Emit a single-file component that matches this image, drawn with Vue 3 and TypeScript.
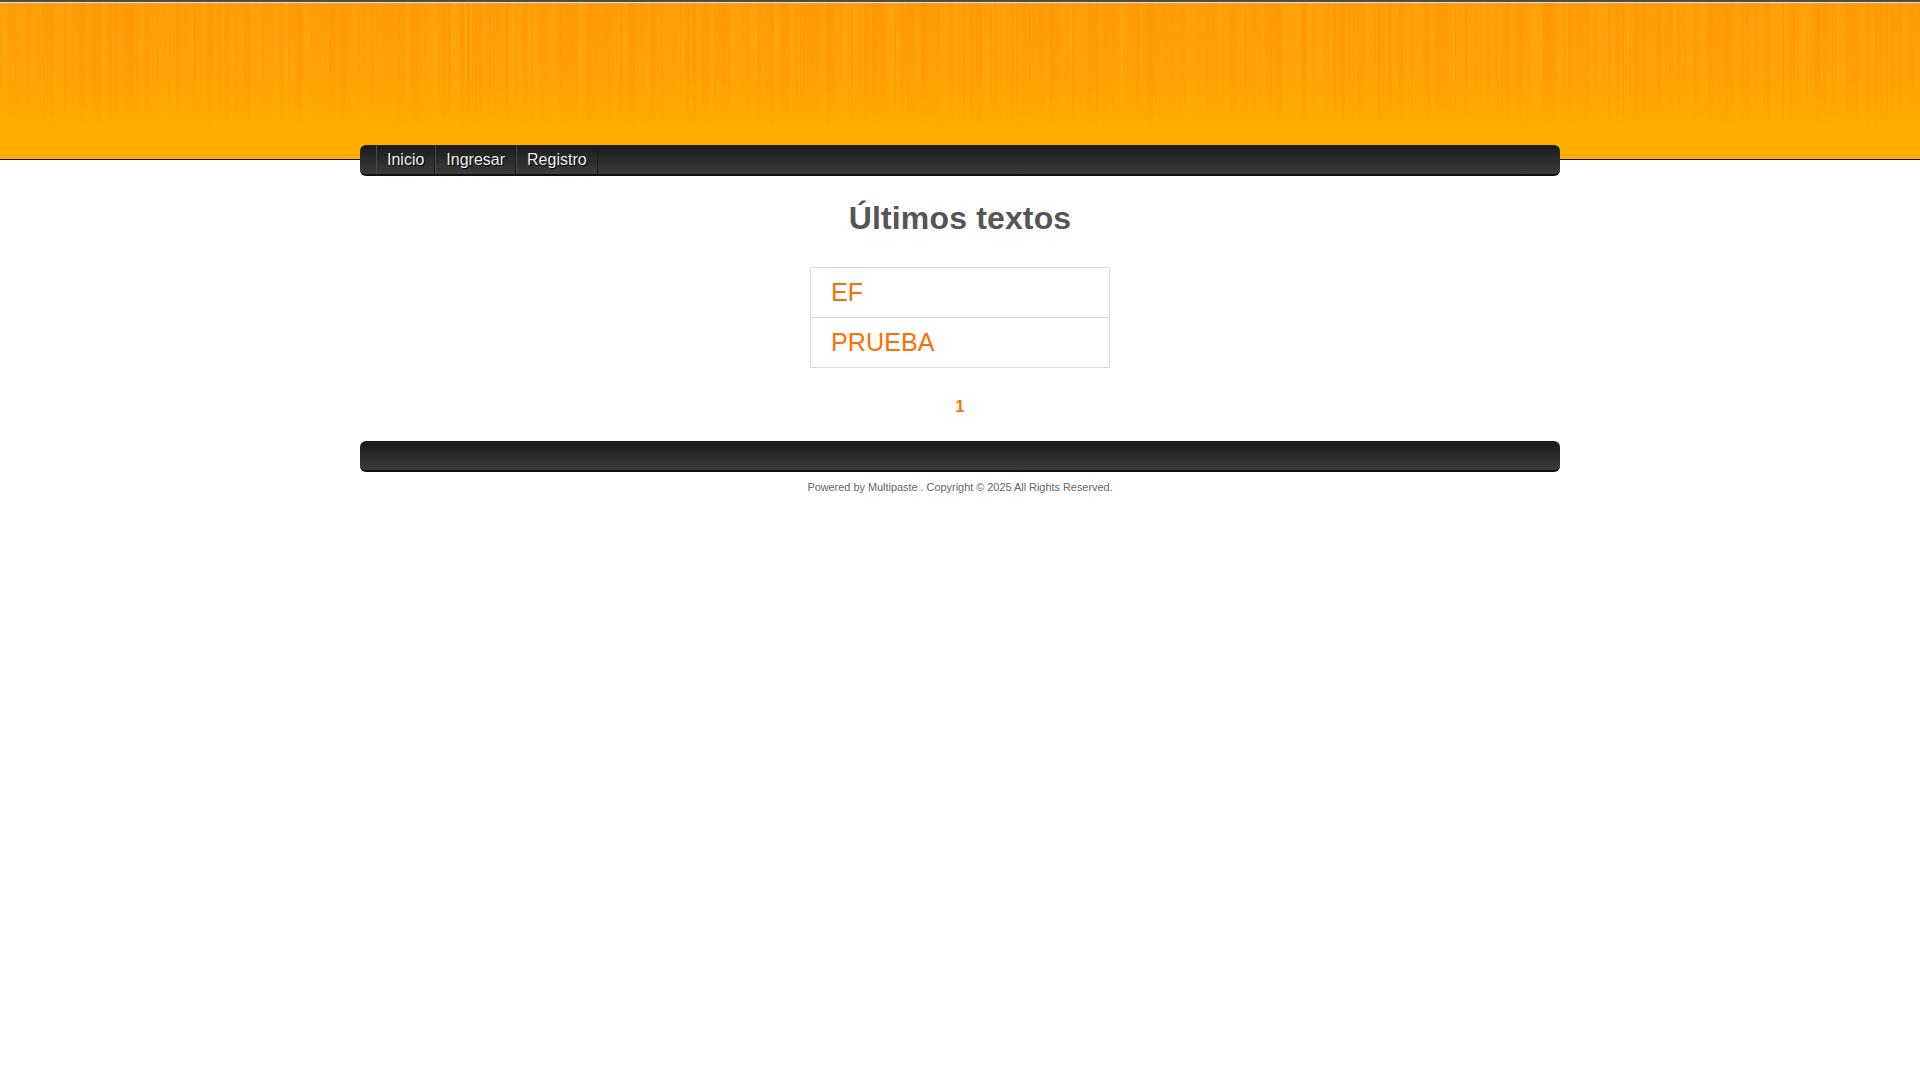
<script setup lang="ts">
const links: string[] = ['Inicio', 'Ingresar', 'Registro']
const posts: string[] = ['EF', 'PRUEBA']

// Pseudo-random vertical streaks for the header texture.
let seed = 20250
const rnd = (): number => {
  seed = (seed * 16807) % 2147483647
  return seed / 2147483647
}
const makeStreaks = (): string => {
  const stops: string[] = []
  let x = 0
  while (x < 1920) {
    const w = 1 + Math.floor(rnd() * rnd() * 6)
    const a = (rnd() * 0.34).toFixed(2)
    const c = rnd() > 0.55 ? `rgba(255,140,0,${a})` : `rgba(255,178,20,${a})`
    stops.push(`${c} ${x}px ${x + w}px`)
    x += w
  }
  return `linear-gradient(90deg, ${stops.join(',')})`
}
const streaks = makeStreaks()
</script>

<template>
  <div class="page">
    <header class="header">
      <div class="streaks" :style="{ backgroundImage: streaks }"></div>
    </header>
    <div class="wrap">
      <nav class="bar nav">
        <a v-for="l in links" :key="l" class="nav-link" href="#">{{ l }}</a>
      </nav>
      <main class="content">
        <h1 class="title">Últimos textos</h1>
        <ul class="list">
          <li v-for="p in posts" :key="p" class="item"><a href="#">{{ p }}</a></li>
        </ul>
        <div class="pager">1</div>
      </main>
      <div class="bar foot"></div>
      <p class="copy">Powered by Multipaste . Copyright © 2025 All Rights Reserved.</p>
    </div>
  </div>
</template>

<style scoped>
.page { font-family: "Liberation Sans", Arial, sans-serif; }
.header {
  height: 157px;
  border-top: 2px solid #4a4a4a;
  border-bottom: 1px solid #111;
  background: linear-gradient(180deg, #ff9b0a 0, #ffa303 50%, #ffae00 82%, #ffae00 100%);
  position: relative;
}
.streaks {
  height: 128px;
  -webkit-mask-image: linear-gradient(180deg, #000 0, #000 55%, transparent 100%);
  mask-image: linear-gradient(180deg, #000 0, #000 55%, transparent 100%);
  border-top: 1px solid #f6e8d0;
}
.wrap { width: 1200px; margin: -15px auto 0; position: relative; }
.bar {
  height: 29px;
  border-radius: 6px;
  background: linear-gradient(180deg, #1a1a1a 0, #3c3c3c 100%);
  border-bottom: 2px solid #111;
  box-sizing: content-box;
}
.nav { display: flex; padding-left: 16px; }
.nav-link {
  display: block;
  padding: 0 10px;
  line-height: 29px;
  color: #eee;
  font-size: 16px;
  text-decoration: none;
  text-shadow: 1px 1px 1px #000;
  border-left: 1px solid #484848;
  border-right: 1px solid #1d1d1d;
}
.content { text-align: center; }
.title { margin: 0; padding-top: 24px; font-size: 32px; letter-spacing: 0.15px; line-height: 37px; font-weight: 700; color: #555; }
.list {
  list-style: none;
  margin: 30px auto 0;
  padding: 0;
  width: 298px;
  border: 1px solid #d8d8d8;
  text-align: left;
}
.item { height: 49px; padding-left: 20px; line-height: 49px; font-size: 25.2px; }
.item + .item { border-top: 1px solid #d8d8d8; }
.item a { color: #ff6f00; text-decoration: none; }
.pager { margin-top: 29px; height: 20px; line-height: 20px; font-size: 16px; font-weight: 700; color: #ff6f00; }
.foot { margin-top: 24px; }
.copy { margin: 9px 0 0; text-align: center; font-size: 10.9px; line-height: 13px; color: #666; }
</style>

<style>
html, body { background: #fff; }
</style>
